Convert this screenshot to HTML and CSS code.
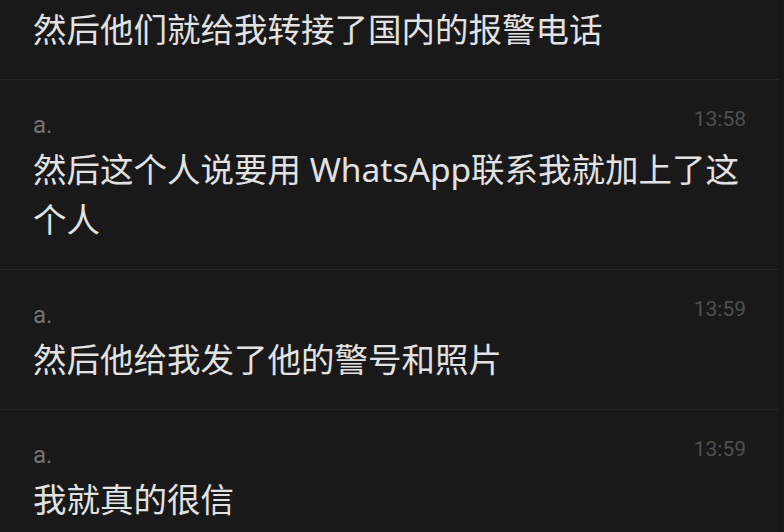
FILE: index.html
```html
<!DOCTYPE html>
<html lang="zh-CN">
<head>
    <meta charset="UTF-8">
    <meta name="viewport" content="width=device-width, initial-scale=1.0">
    <title>聊天记录</title>
    <link rel="stylesheet" href="styles.css">
</head>
<body>

    <div class="chat">
        <div class="msg cont">
            <div class="msg-text">然后他们就给我转接了国内的报警电话</div>
        </div>

        <div class="msg">
            <div class="msg-head">
                <span class="msg-name">a.</span>
                <span class="msg-time">13:58</span>
            </div>
            <div class="msg-text">然后这个人说要用 WhatsApp联系我就加上了这个人</div>
        </div>

        <div class="msg">
            <div class="msg-head">
                <span class="msg-name">a.</span>
                <span class="msg-time">13:59</span>
            </div>
            <div class="msg-text">然后他给我发了他的警号和照片</div>
        </div>

        <div class="msg last">
            <div class="msg-head">
                <span class="msg-name">a.</span>
                <span class="msg-time">13:59</span>
            </div>
            <div class="msg-text">我就真的很信</div>
        </div>
    </div>

</body>
</html>
```

FILE: styles.css
```css
body {
    margin: 0;
    background-color: #191919;
    font-family: "Noto Sans CJK SC", sans-serif;
    overflow: hidden;
}

.chat {
    display: flex;
    flex-direction: column;
    border-right: 1px solid #141414;
    min-height: 532px;
    box-sizing: border-box;
    width: 780px;
}

.msg {
    padding: 29px 33px 25px 33px;
    border-bottom: 1px solid #252525;
}

.msg.cont {
    padding-top: 4px;
}

.msg.last {
    border-bottom: none;
}

.msg-head {
    display: flex;
    justify-content: space-between;
    align-items: flex-start;
    margin-bottom: 3px;
    font-family: "Roboto", "Liberation Sans", sans-serif;
}

.msg-name {
    font-size: 24px;
    line-height: 32px;
    color: #747474;
}

.msg-time {
    font-size: 21px;
    line-height: 20px;
    color: #505050;
}

.msg-text {
    font-family: "Noto Sans", "Noto Sans CJK SC", sans-serif;
    font-size: 33.5px;
    line-height: 50px;
    color: #e2e2e2;
}
```
